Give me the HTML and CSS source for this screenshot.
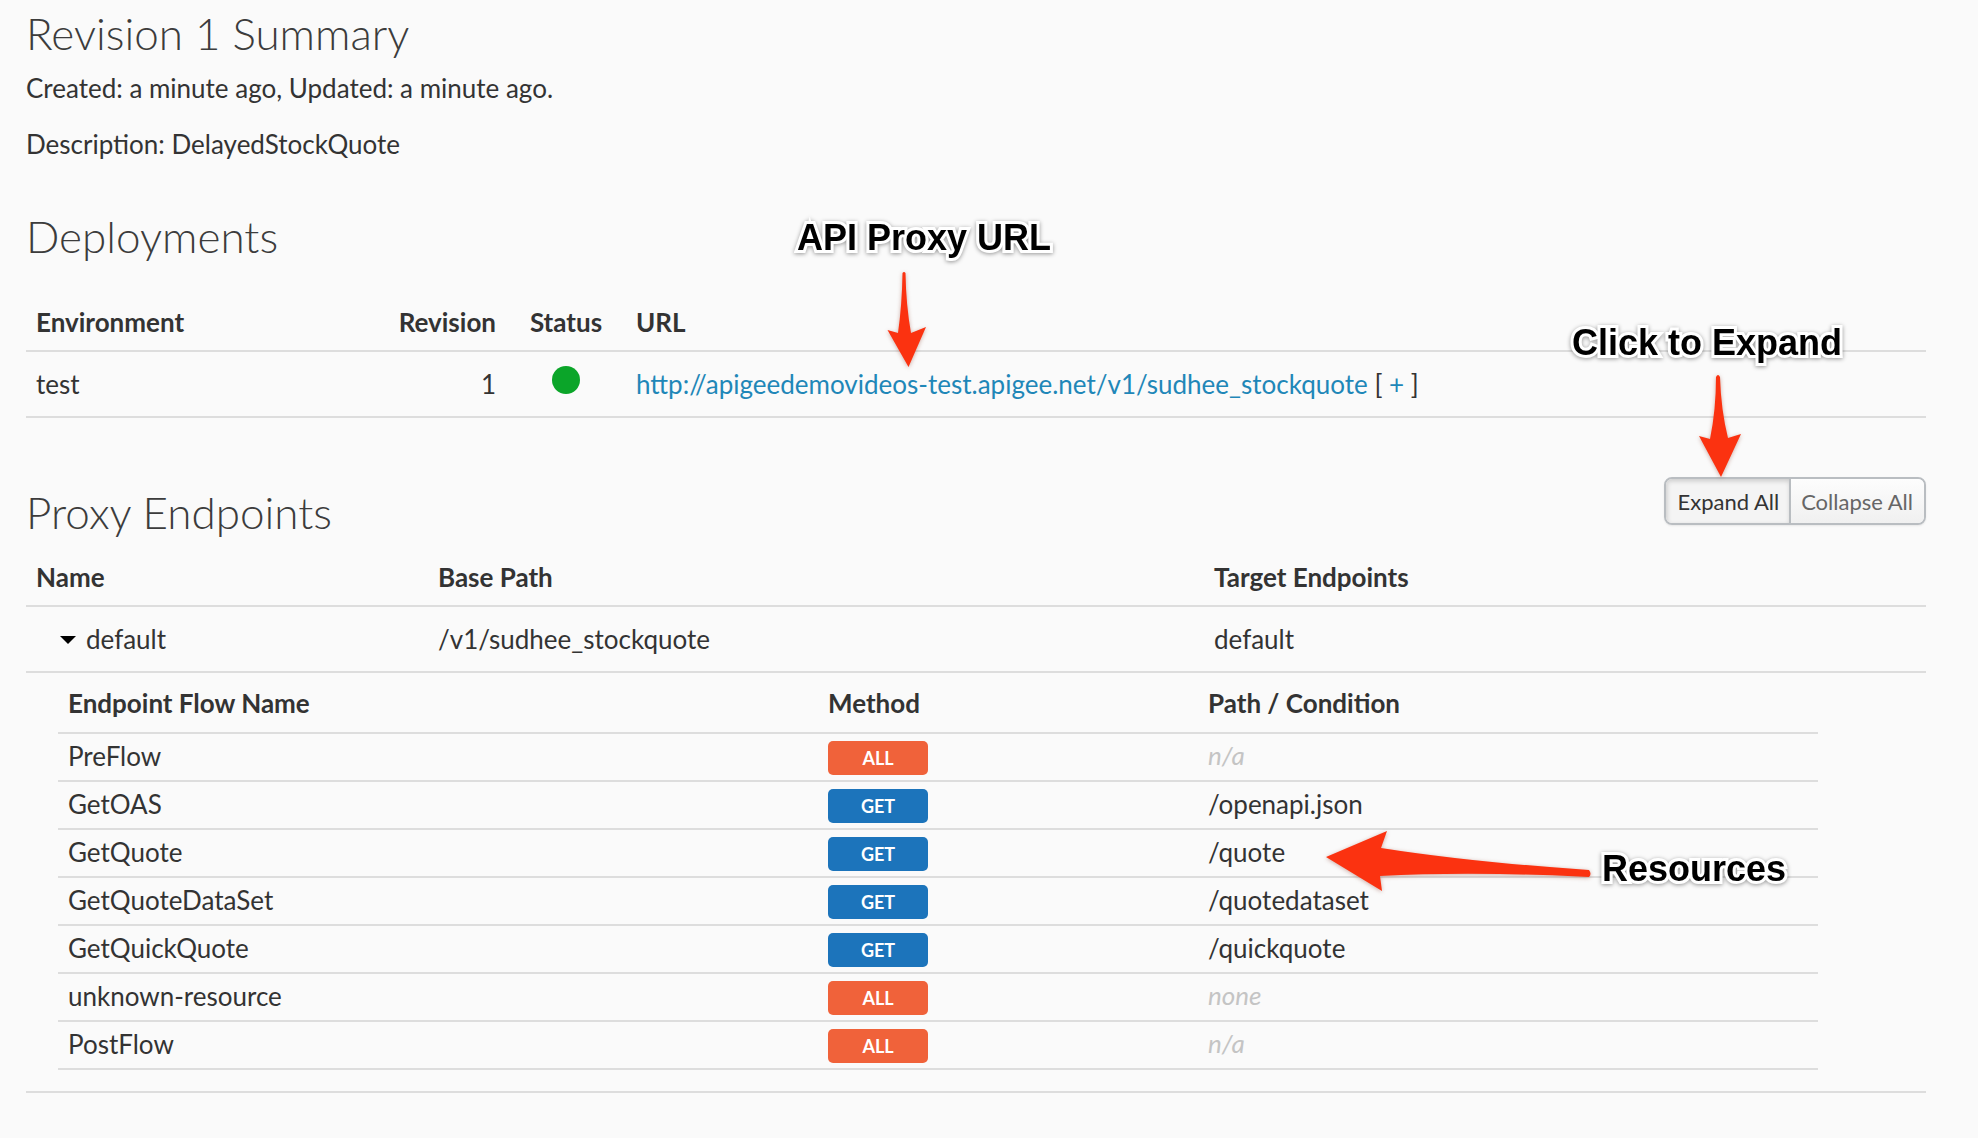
FILE: index.html
```html
<!DOCTYPE html>
<html lang="en">
<head>
<meta charset="utf-8">
<title>Revision 1 Summary</title>
<link rel="stylesheet" href="styles.css">
</head>
<body>
<main class="page">
  <h1 class="title title-first">Revision 1 Summary</h1>
  <p class="meta meta-created">Created: a minute ago, Updated: a minute ago.</p>
  <p class="meta meta-desc">Description: DelayedStockQuote</p>

  <h2 class="title title-deploy">Deployments</h2>
  <table class="grid deploy">
    <colgroup><col class="d1"><col class="d2"><col class="d3"><col></colgroup>
    <thead>
      <tr><th>Environment</th><th class="right">Revision</th><th class="center">Status</th><th>URL</th></tr>
    </thead>
    <tbody>
      <tr>
        <td>test</td>
        <td class="right">1</td>
        <td class="center"><span class="dot"></span></td>
        <td><a class="link" href="#">http://apigeedemovideos-test.apigee.net/v1/sudhee_stockquote</a> [ <a class="link" href="#">+</a> ]</td>
      </tr>
    </tbody>
  </table>

  <div class="endpoint-head">
    <h2 class="title title-proxy">Proxy Endpoints</h2>
    <div class="btn-group">
      <button class="btn btn-active" type="button">Expand All</button>
      <button class="btn" type="button">Collapse All</button>
    </div>
  </div>
  <table class="grid endpoints">
    <colgroup><col class="p1"><col class="p2"><col></colgroup>
    <thead>
      <tr><th>Name</th><th>Base Path</th><th>Target Endpoints</th></tr>
    </thead>
    <tbody>
      <tr>
        <td class="caret-cell"><span class="caret"></span>default</td>
        <td>/v1/sudhee_stockquote</td>
        <td>default</td>
      </tr>
      <tr>
        <td class="nest" colspan="3">
          <table class="grid flows">
            <colgroup><col class="f1"><col class="f2"><col></colgroup>
            <thead>
              <tr><th>Endpoint Flow Name</th><th class="method-head">Method</th><th>Path / Condition</th></tr>
            </thead>
            <tbody>
              <tr><td>PreFlow</td><td><span class="badge badge-all">ALL</span></td><td class="muted">n/a</td></tr>
              <tr><td>GetOAS</td><td><span class="badge badge-get">GET</span></td><td>/openapi.json</td></tr>
              <tr><td>GetQuote</td><td><span class="badge badge-get">GET</span></td><td>/quote</td></tr>
              <tr><td>GetQuoteDataSet</td><td><span class="badge badge-get">GET</span></td><td>/quotedataset</td></tr>
              <tr><td>GetQuickQuote</td><td><span class="badge badge-get">GET</span></td><td>/quickquote</td></tr>
              <tr><td>unknown-resource</td><td><span class="badge badge-all">ALL</span></td><td class="muted">none</td></tr>
              <tr><td>PostFlow</td><td><span class="badge badge-all">ALL</span></td><td class="muted">n/a</td></tr>
            </tbody>
          </table>
        </td>
      </tr>
    </tbody>
  </table>
</main>

<svg class="arrows" width="1978" height="1138" viewBox="0 0 1978 1138" aria-hidden="true">
  <g class="arrow">
    <path d="M902.5 273 Q904 271 905.5 273 Q906 305 911 333 L926 327 L908.5 367 L887.5 330 L898 333 Q902 305 902.5 273 Z"/>
    <path d="M1716 377 Q1718 373 1720 377 Q1721 410 1728 438 L1741 434 L1721 477 L1699 436 L1710 439 Q1716 410 1716 377 Z"/>
    <path d="M1589 870 Q1592 874 1589 877 Q1470 871 1380 876 L1382 891 L1326 857 L1387 831 L1381 848 Q1470 862 1589 870 Z"/>
  </g>
</svg>
<span class="note note-url">API Proxy URL</span>
<span class="note note-expand">Click to Expand</span>
<span class="note note-res">Resources</span>
</body>
</html>
```
FILE: styles.css
```css
* { box-sizing: border-box; }
html, body { margin: 0; padding: 0; }
body {
  position: relative;
  width: 1978px;
  height: 1138px;
  overflow: hidden;
  background: #fafafa;
  color: #333;
  font-family: Lato, "Open Sans", sans-serif;
  font-size: 26px;
}
.page { width: 1926px; padding-left: 26px; }
.title {
  margin: 0;
  font-weight: 300;
  font-size: 44px;
  line-height: 50px;
  color: #3c3c3c;
}
.title-first { padding-top: 8px; }
.meta { margin: 0; line-height: 30px; }
.meta-created { padding-top: 15px; }
.meta-desc { padding-top: 26px; }
.title-deploy { padding-top: 52px; }
.title-proxy { padding-top: 10px; }

.grid { border-collapse: collapse; table-layout: fixed; width: 100%; }
.grid th, .grid td { padding: 0 10px; text-align: left; border-bottom: 2px solid #ddd; }
.grid th { font-weight: 700; }
.grid .right { text-align: right; }
.grid .center { text-align: center; }

.deploy { margin-top: 24px; }
.deploy th, .deploy td { height: 66px; }
.deploy th { padding-top: 8px; padding-bottom: 0; }
.d1 { width: 350px; }
.d2 { width: 130px; }
.d3 { width: 120px; }
.dot {
  display: block;
  width: 28px;
  height: 28px;
  margin: -9px auto 0;
  border-radius: 50%;
  background: #0ba529;
}
.link { color: #1f87b8; text-decoration: none; }

.endpoint-head {
  display: flex;
  justify-content: space-between;
  align-items: flex-start;
  margin-top: 59px;
  height: 63px;
}
.btn-group {
  display: flex;
  height: 48px;
  border: 2px solid #b9bdc1;
  border-radius: 8px;
  overflow: hidden;
  box-shadow: 0 1px 2px rgba(0,0,0,.08);
}
.btn {
  border: 0;
  padding: 0 11px 0 10px;
  font: 22px Lato, sans-serif;
  color: #666;
  background: linear-gradient(#fdfdfd, #f0f0f0);
}
.btn-active {
  color: #333;
  border-right: 2px solid #b9bdc1;
  padding: 0 10px 0 11px;
  background: #f4f4f4;
  box-shadow: inset 1px 2px 5px rgba(0,0,0,.18);
}

.endpoints th, .endpoints td { height: 66px; }
.endpoints > thead th { padding-top: 8px; }
.p1 { width: 402px; }
.p2 { width: 776px; }
.grid .caret-cell { padding-left: 34px; }
.caret {
  display: inline-block;
  width: 0;
  height: 0;
  margin-right: 10px;
  vertical-align: 5px;
  border-left: 8px solid transparent;
  border-right: 8px solid transparent;
  border-top: 8px solid #000;
}
.grid td.nest { height: auto; padding: 0 108px 21px 32px; }

.flows th { height: 60px; }
.flows td { height: 48px; }
.flows tbody td { padding-bottom: 2px; }
.flows tbody td.muted { padding-bottom: 4px; }
.grid .method-head { padding-left: 9px; }
.f1 { width: 761px; }
.f2 { width: 379px; }
.badge {
  display: block;
  width: 100px;
  height: 34px;
  margin: 3px 0 0 -1px;
  border-radius: 5px;
  color: #fff;
  font-size: 18px;
  font-weight: 700;
  line-height: 35px;
  text-align: center;
}
.badge-all { background: #f0623a; }
.badge-get { background: #1c74bb; }
.muted { color: #c4c4c4; font-style: italic; }

.arrows { position: absolute; left: 0; top: 0; pointer-events: none; }
.arrow { fill: #fb3210; filter: drop-shadow(0 1px 2px rgba(120,30,10,.35)); }

.note {
  position: absolute;
  font-family: "Liberation Sans", Arial, sans-serif;
  font-weight: 700;
  font-size: 36px;
  line-height: 40px;
  color: #000;
  white-space: nowrap;
  -webkit-text-stroke: 6px #fff;
  paint-order: stroke fill;
  filter: drop-shadow(0 1px 2px rgba(0,0,0,.4));
}
.note-url { left: 797px; top: 218px; }
.note-expand { left: 1572px; top: 323px; }
.note-res { left: 1602px; top: 849px; }
```
